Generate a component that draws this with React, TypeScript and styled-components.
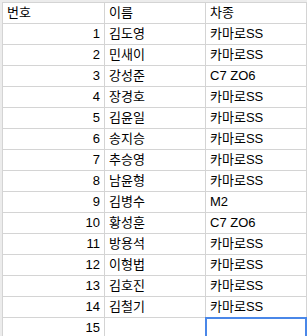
import { Fragment } from 'react';
import styled, { createGlobalStyle } from 'styled-components';

const GlobalStyle = createGlobalStyle`
  html, body {
    margin: 0;
    padding: 0;
    background: #ffffff;
  }
  * {
    box-sizing: border-box;
  }
`;

type Row = { no: number; name: string; car: string };

const rows: Row[] = [
  { no: 1, name: '김도영', car: '카마로SS' },
  { no: 2, name: '민새이', car: '카마로SS' },
  { no: 3, name: '강성준', car: 'C7 ZO6' },
  { no: 4, name: '장경호', car: '카마로SS' },
  { no: 5, name: '김윤일', car: '카마로SS' },
  { no: 6, name: '송지승', car: '카마로SS' },
  { no: 7, name: '추승영', car: '카마로SS' },
  { no: 8, name: '남윤형', car: '카마로SS' },
  { no: 9, name: '김병수', car: 'M2' },
  { no: 10, name: '황성훈', car: 'C7 ZO6' },
  { no: 11, name: '방용석', car: '카마로SS' },
  { no: 12, name: '이형법', car: '카마로SS' },
  { no: 13, name: '김호진', car: '카마로SS' },
  { no: 14, name: '김철기', car: '카마로SS' },
  { no: 15, name: '', car: '' },
];

function App() {
  return (
    <Page>
      <GlobalStyle />
      <Sheet>
        {/* header row */}
        <Cell>번호</Cell>
        <Cell>이름</Cell>
        <Cell>차종</Cell>
        {rows.map((row) => (
          <Fragment key={row.no}>
            <Cell $align="right">{row.no}</Cell>
            <Cell>{row.name}</Cell>
            <Cell $selected={row.no === 15}>{row.car}</Cell>
          </Fragment>
        ))}
      </Sheet>
    </Page>
  );
}

export default App;

const Page = styled.div`
  width: 307px;
  height: 336px;
  overflow: hidden;
  background: linear-gradient(to right, #ececec 2px, transparent 2px),
    linear-gradient(to bottom, #ececec 2px, #ffffff 2px);
  padding: 2px 0 0 2px;
`;

const Sheet = styled.div`
  display: grid;
  grid-template-columns: 102px 101px 101px;
  grid-auto-rows: 21px;
  border-left: 1px solid #d4d4d4;
  border-top: 1px solid #d4d4d4;
  background: #ffffff;
  width: max-content;
`;

const Cell = styled.div<{ $align?: 'left' | 'right'; $selected?: boolean }>`
  position: relative;
  display: flex;
  align-items: flex-end;
  justify-content: ${(p) => (p.$align === 'right' ? 'flex-end' : 'flex-start')};
  padding: 0 4px 2px 4px;
  border-right: 1px solid #d4d4d4;
  border-bottom: 1px solid #d4d4d4;
  font-family: 'Liberation Sans', 'Noto Sans CJK KR', sans-serif;
  font-size: 13px;
  line-height: 16px;
  color: #000000;
  white-space: nowrap;

  ${(p) =>
    p.$selected &&
    `
    &::after {
      content: '';
      position: absolute;
      left: -1px;
      top: -1px;
      right: -1px;
      bottom: -1px;
      border: 2px solid #4a87e8;
    }
  `}
`;
